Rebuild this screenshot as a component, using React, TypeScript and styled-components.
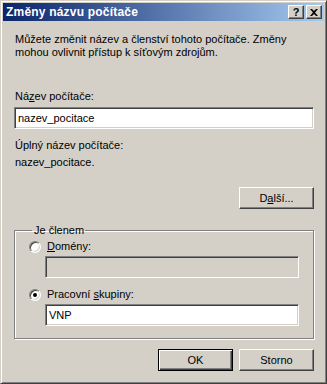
import styled, { createGlobalStyle, css } from 'styled-components';

const GlobalStyle = createGlobalStyle`
  html, body {
    margin: 0;
    padding: 0;
    background: #d4d0c8;
  }
  * {
    box-sizing: border-box;
  }
`;

// Outer window frame, classic 3D border
const Window = styled.div`
  width: 327px;
  height: 384px;
  background: #d4d0c8;
  border: 1px solid;
  border-color: #d4d0c8 #404040 #404040 #d4d0c8;
  box-shadow: inset 1px 1px 0 #fff, inset -1px -1px 0 #808080;
  padding: 2px;
  display: flex;
  flex-direction: column;
  font-family: 'Liberation Sans', Arial, sans-serif;
  font-size: 11px;
  color: #000;
`;

const TitleBar = styled.div`
  height: 18px;
  display: flex;
  align-items: center;
  padding: 0 2px 0 3px;
  background: linear-gradient(90deg, #0a246a, #a6caf0);
  color: #fff;
  font-weight: bold;
  font-size: 12px;
`;

const Title = styled.span`
  flex: 1;
  letter-spacing: 0.2px;
`;

const raised = css`
  background: #d4d0c8;
  border: 1px solid;
  border-color: #fff #404040 #404040 #fff;
  box-shadow: inset -1px -1px 0 #808080;
`;

const CaptionButton = styled.div<{ $gap?: boolean }>`
  ${raised};
  width: 16px;
  height: 14px;
  display: flex;
  align-items: center;
  justify-content: center;
  color: #000;
  font-weight: bold;
  font-size: 11px;
  margin-left: ${({ $gap }) => ($gap ? '2px' : '0')};
`;

const Body = styled.div`
  flex: 1;
  display: flex;
  flex-direction: column;
  padding: 12px 10px 0 11px;
`;

const Text = styled.div<{ $top?: number }>`
  line-height: 13px;
  padding-left: 1px;
  margin-top: ${({ $top }) => $top ?? 0}px;
`;

const Field = styled.div<{ $disabled?: boolean; $top?: number }>`
  height: 22px;
  margin-top: ${({ $top }) => $top ?? 0}px;
  border: 1px solid;
  border-color: #808080 #fff #fff #808080;
  box-shadow: inset 1px 1px 0 #404040, inset -1px -1px 0 #d4d0c8;
  background: ${({ $disabled }) => ($disabled ? '#d4d0c8' : '#fff')};
  padding: 0 3px;
  display: flex;
  align-items: center;
  line-height: 13px;
`;

const ButtonRow = styled.div<{ $top: number }>`
  display: flex;
  justify-content: flex-end;
  gap: 6px;
  margin-top: ${({ $top }) => $top}px;
`;

const Button = styled.div<{ $default?: boolean }>`
  width: 75px;
  height: 22px;
  display: flex;
  align-items: center;
  justify-content: center;
  ${({ $default }) =>
    $default
      ? css`
          border: 1px solid #000;
          background: #d4d0c8;
          box-shadow: inset 1px 1px 0 #fff, inset -1px -1px 0 #404040,
            inset -2px -2px 0 #808080;
        `
      : raised};
`;

const Group = styled.fieldset`
  margin: 15px 0 0;
  padding: 0 14px 12px 14px;
  border: 1px solid #808080;
  box-shadow: inset 1px 1px 0 #fff, 1px 1px 0 #fff;
  height: 115px;
  display: flex;
  flex-direction: column;
`;

const Legend = styled.legend`
  padding: 0 1px 0 2px;
  margin-left: 3px;
  line-height: 13px;
`;

const RadioRow = styled.div<{ $top: number }>`
  display: flex;
  align-items: center;
  gap: 6px;
  margin-top: ${({ $top }) => $top}px;
  line-height: 13px;
`;

const Radio = styled.span<{ $checked?: boolean }>`
  position: relative;
  width: 12px;
  height: 12px;
  border-radius: 50%;
  border: 1px solid;
  border-color: #808080 #fff #fff #808080;
  box-shadow: inset 1px 1px 0 #404040, inset -1px -1px 0 #d4d0c8;
  background: #fff;

  &::after {
    content: '';
    display: ${({ $checked }) => ($checked ? 'block' : 'none')};
    position: absolute;
    left: 3px;
    top: 3px;
    width: 4px;
    height: 4px;
    border-radius: 50%;
    background: #000;
  }
`;

const Indent = styled.div`
  padding-left: 16px;
  margin-top: 3px;
`;

const CloseGlyph = () => (
  <svg width="8" height="7" viewBox="0 0 8 7">
    <path d="M0 0h2l2 2 2-2h2L5 3.5 8 7H6L4 5 2 7H0l3-3.5z" fill="#000" />
  </svg>
);

const App = () => {
  return (
    <>
      <GlobalStyle />
      <Window>
        <TitleBar>
          <Title>Změny názvu počítače</Title>
          <CaptionButton>?</CaptionButton>
          <CaptionButton $gap>
            <CloseGlyph />
          </CaptionButton>
        </TitleBar>
        <Body>
          <Text>
            Můžete změnit název a členství tohoto počítače. Změny
            <br />
            mohou ovlivnit přístup k síťovým zdrojům.
          </Text>
          <Text $top={31}>
            Ná<u>z</u>ev počítače:
          </Text>
          <Field $top={4}>nazev_pocitace</Field>
          <Text $top={10}>Úplný název počítače:</Text>
          <Text $top={4}>nazev_pocitace.</Text>
          <ButtonRow $top={18}>
            <Button>
              D<u>a</u>lší...
            </Button>
          </ButtonRow>
          <Group>
            <Legend>Je členem</Legend>
            <RadioRow $top={3}>
              <Radio />
              <span>
                <u>D</u>omény:
              </span>
            </RadioRow>
            <Indent>
              <Field $disabled />
            </Indent>
            <RadioRow $top={10}>
              <Radio $checked />
              <span>
                Pracovní <u>s</u>kupiny:
              </span>
            </RadioRow>
            <Indent>
              <Field>VNP</Field>
            </Indent>
          </Group>
          <ButtonRow $top={10}>
            <Button $default>OK</Button>
            <Button>Storno</Button>
          </ButtonRow>
        </Body>
      </Window>
    </>
  );
};

export default App;
